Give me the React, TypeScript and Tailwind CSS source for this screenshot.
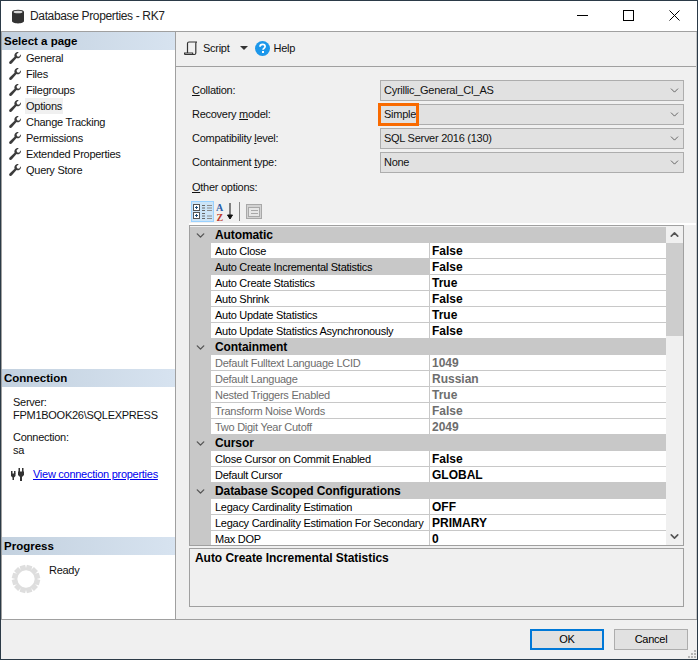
import { ChevronDown, ChevronUp } from "lucide-react";

const pages = ["General", "Files", "Filegroups", "Options", "Change Tracking", "Permissions", "Extended Properties", "Query Store"];

type Row = { name: string; value: string };
type Category = { title: string; disabled?: boolean; rows: Row[] };

const categories: Category[] = [
  {
    title: "Automatic",
    rows: [
      { name: "Auto Close", value: "False" },
      { name: "Auto Create Incremental Statistics", value: "False" },
      { name: "Auto Create Statistics", value: "True" },
      { name: "Auto Shrink", value: "False" },
      { name: "Auto Update Statistics", value: "True" },
      { name: "Auto Update Statistics Asynchronously", value: "False" },
    ],
  },
  {
    title: "Containment",
    disabled: true,
    rows: [
      { name: "Default Fulltext Language LCID", value: "1049" },
      { name: "Default Language", value: "Russian" },
      { name: "Nested Triggers Enabled", value: "True" },
      { name: "Transform Noise Words", value: "False" },
      { name: "Two Digit Year Cutoff", value: "2049" },
    ],
  },
  {
    title: "Cursor",
    rows: [
      { name: "Close Cursor on Commit Enabled", value: "False" },
      { name: "Default Cursor", value: "GLOBAL" },
    ],
  },
  {
    title: "Database Scoped Configurations",
    rows: [
      { name: "Legacy Cardinality Estimation", value: "OFF" },
      { name: "Legacy Cardinality Estimation For Secondary", value: "PRIMARY" },
      { name: "Max DOP", value: "0" },
    ],
  },
];

function Wrench() {
  return (
    <svg width="14" height="14" viewBox="0 0 14 14" className="shrink-0">
      <path
        d="M13 3.2c.2 1.6-.5 3-1.8 3.7-.9.5-1.9.5-2.7.2L3.7 12.6c-.6.6-1.500.6-2.100.1-.6-.6-.6-1.500 0-2.100l5-4.900c-.4-1-.3-2.100.3-3C7.700 1.500 9.200.900 10.700 1.200L8.600 3.300l.4 2 2 .4L13 3.200z"
        fill="#3c3c3c"
      />
    </svg>
  );
}

function DbIcon() {
  return (
    <svg width="14" height="15" viewBox="0 0 14 15">
      <path d="M1 3v9c0 1.300 2.700 2.400 6 2.400s6-1.100 6-2.400V3z" fill="#333" />
      <ellipse cx="7" cy="3" rx="6" ry="2.300" fill="#333" />
      <ellipse cx="7" cy="3" rx="4.500" ry="1.300" fill="#d8d8d8" />
    </svg>
  );
}

function ScriptIcon() {
  return (
    <svg width="14" height="15" viewBox="0 0 14 15" fill="none" stroke="#333" strokeWidth="1.200">
      <path d="M3.500 12V2.500c0-.8.500-1.500 1.500-1.500h8c-.7 0-1.200.7-1.200 1.500v9.500c0 1-.6 1.500-1.500 1.500H1.500c-.7 0-1-.5-1-1.500H8.500c0 1 .5 1.500 1.300 1.500" />
    </svg>
  );
}

function HelpIcon() {
  return (
    <svg width="15" height="15" viewBox="0 0 15 15">
      <circle cx="7.500" cy="7.500" r="7.500" fill="#1c97ea" />
      <path d="M5 5.800c0-1.500 1.100-2.400 2.600-2.400 1.500 0 2.500.9 2.500 2.100 0 1.900-2.100 1.800-2.100 3.300" fill="none" stroke="#fff" strokeWidth="1.700" />
      <rect x="7" y="10" width="2" height="2" fill="#fff" />
    </svg>
  );
}

function PlugIcon() {
  return (
    <svg width="14" height="14" viewBox="0 0 14 14" fill="#333" className="shrink-0">
      <rect x="0" y="4" width="1.500" height="3" />
      <rect x="3" y="4" width="1.500" height="3" />
      <path d="M0 6.500h4.500V9L3 10.500V13H1.500v-2.500L0 9z" />
      <rect x="7.500" y="1" width="1.500" height="4" />
      <rect x="11" y="1" width="1.500" height="4" />
      <path d="M7 4.500h6V8l-2 2v4H9v-4L7 8z" />
    </svg>
  );
}

function Spinner() {
  const marks = Array.from({ length: 12 }, (_, i) => i * 30 + 15);
  return (
    <svg width="30" height="30" viewBox="0 0 32 32" className="shrink-0">
      {marks.map((a) => (
        <rect key={a} x="13" y="1" width="6" height="6" fill="#dedede" transform={`rotate(${a} 16 16)`} />
      ))}
    </svg>
  );
}

function CategorizedIcon() {
  return (
    <svg width="20" height="17" viewBox="0 0 20 17" fill="none">
      <rect x="0.500" y="1.500" width="6" height="6" fill="#fff" stroke="#555" />
      <rect x="0.500" y="9.500" width="6" height="6" fill="#fff" stroke="#555" />
      <path d="M2 4.500h3M3.500 3v3M2 12.500h3M3.500 11v3" stroke="#1f4e79" />
      <path d="M9 2.500h3M9 5h3M9 7.500h3M9 10.500h3M9 13h3M9 15.500h3" stroke="#666" />
      <path d="M14 2.500h5M14 5h5M14 7.500h5M14 13h5M14 15.500h5" stroke="#8a8a8a" />
    </svg>
  );
}

function SortIcon() {
  return (
    <svg width="18" height="20" viewBox="0 0 18 20">
      <text x="0" y="9" fontSize="10" fontWeight="700" fontFamily="'Liberation Serif', serif" fill="#2a5ea8">A</text>
      <text x="0.500" y="19" fontSize="10" fontWeight="700" fontFamily="'Liberation Serif', serif" fill="#c0392b">Z</text>
      <path d="M14 1v15M11.500 13l2.500 4 2.500-4z" stroke="#111" fill="#111" />
    </svg>
  );
}

function PagesIcon() {
  return (
    <svg width="16" height="15" viewBox="0 0 16 15" fill="none">
      <rect x="0.500" y="0.500" width="15" height="14" fill="#d2d2d2" stroke="#a8a8a8" />
      <rect x="2.500" y="3.500" width="11" height="9" fill="#e6e6e6" stroke="#a8a8a8" />
      <path d="M5 6.500h7M5 9.500h7" stroke="#a8a8a8" />
    </svg>
  );
}

function SectionHeader({ title }: { title: string }) {
  return (
    <div className="flex h-[18px] items-center bg-gradient-to-r from-[#c3d1df] to-[#d7e3f0] pl-[2px] pt-px text-[11.500px] font-bold leading-none tracking-normal text-black">
      {title}
    </div>
  );
}

function Combo({ value, highlight }: { value: string; highlight?: boolean }) {
  return (
    <div className="relative flex h-[21px] items-center justify-between border border-[#adadad] bg-[#e1e1e1] pl-[3px] pr-[2px]">
      <span>{value}</span>
      <ChevronDown size={13} strokeWidth={1.300} className="text-[#333]" />
      {highlight && <div className="absolute -left-[3px] -top-[2px] h-[23px] w-[41px] border-[3px] border-[#f96a00]" />}
    </div>
  );
}

function Label({ before, mark, after }: { before?: string; mark: string; after: string }) {
  return (
    <div className="flex items-center pl-[3px]">
      <span>
        {before}
        <span className="underline">{mark}</span>
        {after}
      </span>
    </div>
  );
}

function PropertyGrid() {
  return (
    <div className="flex h-[321px] overflow-hidden border border-[#a0a0a0] bg-[#f0f0f0]">
      <div className="w-[477px] pt-px">
        {categories.map((c) => (
          <div key={c.title}>
            <div className="flex h-[16px] items-center bg-[#c8c8c8]">
              <div className="flex w-[21px] justify-center">
                <ChevronDown size={13} strokeWidth={2.500} className="text-[#555]" />
              </div>
              <span className="pl-[4px] text-[12px] font-bold tracking-[-0.1px] text-black">{c.title}</span>
            </div>
            {c.rows.map((r) => (
              <div key={r.name} className="flex h-[16px]">
                <div className="w-[21px] shrink-0 bg-[#c8c8c8]" />
                <div
                  className={`flex w-[218px] items-center whitespace-nowrap border-b border-[#c8c8c8] pl-[4px] pt-px ${
                    r.name === "Auto Create Incremental Statistics" ? "bg-[#c8c8c8]" : "bg-white"
                  } ${c.disabled ? "text-[#6d6d6d]" : "text-black"}`}
                >
                  {r.name}
                </div>
                <div
                  className={`flex flex-1 items-center border-b border-l border-[#c8c8c8] bg-white pl-[2px] text-[12px] font-bold tracking-normal ${
                    c.disabled ? "text-[#6d6d6d]" : "text-black"
                  }`}
                >
                  {r.value}
                </div>
              </div>
            ))}
          </div>
        ))}
      </div>
      <div className="flex w-[17px] flex-col items-center justify-between">
        <div className="flex w-full flex-col items-center">
          <div className="flex h-[17px] items-center">
            <ChevronUp size={13} strokeWidth={3} className="text-[#555]" />
          </div>
          <div className="h-[93px] w-full bg-[#cdcdcd]" />
        </div>
        <div className="flex h-[17px] items-center">
          <ChevronDown size={13} strokeWidth={3} className="text-[#555]" />
        </div>
      </div>
    </div>
  );
}

export default function App() {
  return (
    <div className="flex h-[660px] w-[698px] flex-col overflow-hidden border border-[#2b3a47] bg-[#f0f0f0] font-['Liberation_Sans',Arial,sans-serif] text-[11px] leading-none tracking-[-0.27px] text-[#111]">
      {/* title bar */}
      <div className="flex h-[31px] shrink-0 items-center justify-between border-b border-[#a0a0a0] bg-white pl-[10px]">
        <div className="flex items-center gap-[5px]">
          <DbIcon />
          <span className="text-[12px] tracking-[-0.35px] text-[#222]">Database Properties - RK7</span>
        </div>
        <div className="mb-[2px] flex items-center">
          <div className="flex h-[28px] w-[46px] items-center justify-center">
            <div className="h-px w-[11px] bg-black" />
          </div>
          <div className="flex h-[28px] w-[46px] items-center justify-center">
            <div className="h-[11px] w-[11px] border border-black" />
          </div>
          <div className="flex h-[28px] w-[46px] items-center justify-center">
            <svg width="11" height="11" viewBox="0 0 11 11" stroke="#000">
              <path d="M0.500 0.500l10 10M10.500 0.500l-10 10" />
            </svg>
          </div>
        </div>
      </div>

      <div className="flex min-h-0 flex-1 border-b border-[#a0a0a0]">
        {/* left panel */}
        <div className="flex w-[175px] shrink-0 flex-col border-x border-[#a0a0a0] bg-white">
          <div className="flex-1">
            <SectionHeader title="Select a page" />
            <div className="pl-[6px]">
              {pages.map((p) => (
                <div key={p} className="flex h-[16px] items-center gap-[3px]">
                  <Wrench />
                  <span className={`flex h-[16px] items-center px-[1px] ${p === "Options" ? "bg-[#f0f0f0]" : ""}`}>{p}</span>
                </div>
              ))}
            </div>
          </div>
          <div className="h-[168px]">
            <SectionHeader title="Connection" />
            <div className="pl-[11px] pt-[9px] leading-[13px]">
              <div>Server:</div>
              <div>FPM1BOOK26\SQLEXPRESS</div>
              <div className="mt-[9px]">Connection:</div>
              <div>sa</div>
              <div className="-ml-[2px] mt-[10px] flex items-center gap-[8px] whitespace-nowrap">
                <PlugIcon />
                <span className="text-[#0000ee] underline">View connection properties</span>
              </div>
            </div>
          </div>
          <div className="h-[82px]">
            <SectionHeader title="Progress" />
            <div className="flex gap-[8px] pl-[9px] pt-[9px]">
              <Spinner />
              <span className="pt-px">Ready</span>
            </div>
          </div>
        </div>

        {/* right panel */}
        <div className="flex min-w-0 flex-1 flex-col border-r border-[#c8c8c8]">
          <div className="flex h-[35px] shrink-0 items-center border-b border-[#a0a0a0] pb-[2px] pl-[8px]">
            <ScriptIcon />
            <span className="ml-[5px]">Script</span>
            <svg width="9" height="5" viewBox="0 0 9 5" className="ml-[10px]">
              <path d="M0 0h8L4 4z" fill="#333" />
            </svg>
            <span className="ml-[6px]">
              <HelpIcon />
            </span>
            <span className="ml-[4px]">Help</span>
          </div>

          <div className="flex flex-1 flex-col pl-[13px] pt-[13px]">
            <div className="grid w-[495px] grid-cols-[191px_304px] gap-y-[3px]">
              <Label mark="C" after="ollation:" />
              <Combo value="Cyrillic_General_CI_AS" />
              <Label before="Recovery " mark="m" after="odel:" />
              <Combo value="Simple" highlight />
              <Label before="Compatibility " mark="l" after="evel:" />
              <Combo value="SQL Server 2016 (130)" />
              <Label before="Containment " mark="t" after="ype:" />
              <Combo value="None" />
            </div>
            <div className="pl-[3px] pt-[9px]">
              <span className="underline">O</span>ther options:
            </div>
            <div className="mt-[8px] flex h-[24px] items-start border-b-2 border-white pl-[2px]">
              <div className="flex h-[21px] w-[23px] items-center justify-center border border-[#99d1ff] bg-[#cce4f7]">
                <CategorizedIcon />
              </div>
              <div className="ml-[2px] mt-px">
                <SortIcon />
              </div>
              <div className="ml-[5px] mt-px h-[19px] w-px bg-[#8a8a8a]" />
              <div className="ml-[6px] mt-[3px]">
                <PagesIcon />
              </div>
            </div>
            <div className="w-[495px]">
              <PropertyGrid />
            </div>
            <div className="mt-[2px] h-[59px] w-[495px] border border-[#a0a0a0] pl-[5px] pt-[3px] text-[12px] font-bold tracking-[-0.05px] text-black">
              Auto Create Incremental Statistics
            </div>
          </div>
        </div>
      </div>

      {/* footer */}
      <div className="relative flex h-[39px] shrink-0 justify-end gap-[10px] pr-[9px] pt-[9px]">
        <button className="h-[21px] w-[74px] border-2 border-[#0078d7] bg-[#e1e1e1] text-black">OK</button>
        <button className="h-[21px] w-[74px] border border-[#adadad] bg-[#e1e1e1] text-black">Cancel</button>
        <svg width="10" height="10" viewBox="0 0 10 10" className="absolute bottom-0 right-0" fill="#b5b5b5">
          <rect x="7" y="1" width="2" height="2" />
          <rect x="4" y="4" width="2" height="2" />
          <rect x="7" y="4" width="2" height="2" />
          <rect x="1" y="7" width="2" height="2" />
          <rect x="4" y="7" width="2" height="2" />
          <rect x="7" y="7" width="2" height="2" />
        </svg>
      </div>
    </div>
  );
}
